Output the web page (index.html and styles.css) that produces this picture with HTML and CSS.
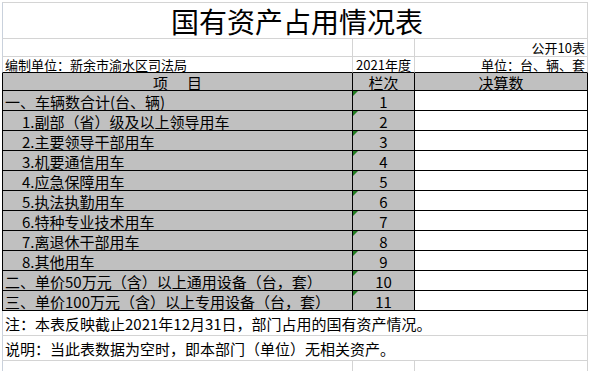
FILE: index.html
```html
<!DOCTYPE html>
<html lang="zh-CN">
<head>
<meta charset="utf-8">
<title>国有资产占用情况表</title>
<link rel="stylesheet" href="styles.css">
</head>
<body>
<div class="sheet">
  <div class="c a span3 top title">国有资产占用情况表</div>

  <div class="c a"></div>
  <div class="c"></div>
  <div class="c small right">公开10表</div>

  <div class="c a small left tb">编制单位：新余市渝水区司法局</div>
  <div class="c small center tb">2021年度</div>
  <div class="c small right tb">单位：台、辆、套</div>

  <div class="c a t grey center">项<span class="gap"></span>目</div>
  <div class="c t grey center">栏次</div>
  <div class="c t grey center">决算数</div>

  <div class="c a t grey left">一、车辆数合计(台、辆)</div>
  <div class="c t grey center num">1</div>
  <div class="c t"></div>

  <div class="c a t grey left sub">1.副部（省）级及以上领导用车</div>
  <div class="c t grey center num">2</div>
  <div class="c t"></div>

  <div class="c a t grey left sub">2.主要领导干部用车</div>
  <div class="c t grey center num">3</div>
  <div class="c t"></div>

  <div class="c a t grey left sub">3.机要通信用车</div>
  <div class="c t grey center num">4</div>
  <div class="c t"></div>

  <div class="c a t grey left sub">4.应急保障用车</div>
  <div class="c t grey center num">5</div>
  <div class="c t"></div>

  <div class="c a t grey left sub">5.执法执勤用车</div>
  <div class="c t grey center num">6</div>
  <div class="c t"></div>

  <div class="c a t grey left sub">6.特种专业技术用车</div>
  <div class="c t grey center num">7</div>
  <div class="c t"></div>

  <div class="c a t grey left sub">7.离退休干部用车</div>
  <div class="c t grey center num">8</div>
  <div class="c t"></div>

  <div class="c a t grey left sub">8.其他用车</div>
  <div class="c t grey center num">9</div>
  <div class="c t"></div>

  <div class="c a t grey left">二、单价50万元（含）以上通用设备（台，套）</div>
  <div class="c t grey center num">10</div>
  <div class="c t"></div>

  <div class="c a t grey left">三、单价100万元（含）以上专用设备（台，套）</div>
  <div class="c t grey center num">11</div>
  <div class="c t"></div>

  <div class="c a span3 left note">注：本表反映截止2021年12月31日，部门占用的国有资产情况。</div>
  <div class="c a span3 left note">说明：当此表数据为空时，即本部门（单位）无相关资产。</div>

  <div class="c a"></div>
  <div class="c"></div>
  <div class="c"></div>
</div>
</body>
</html>
```

FILE: styles.css
```css
html, body {
  margin: 0;
  padding: 0;
  background: #ffffff;
}

body {
  font-family: "Noto Sans CJK SC", "Noto Sans", sans-serif;
  color: #000000;
  width: 592px;
  height: 371px;
  overflow: hidden;
}

.sheet {
  margin: 2px 0 0 2px;
  display: grid;
  grid-template-columns: 351px 62px 173px;
  grid-template-rows: 37px 18px 16px 18px repeat(11, 20px) 25px 25px 11px;
}

.c {
  box-sizing: border-box;
  border-right: 1px solid #d4d4d4;
  border-bottom: 1px solid #d4d4d4;
  display: flex;
  align-items: center;
  font-size: 15px;
  line-height: 18px;
  white-space: nowrap;
  position: relative;
}

.a {
  border-left: 1px solid #c9d1dc;
}

.top {
  border-top: 1px solid #d4d4d4;
}

.span3 {
  grid-column: 1 / 4;
}

.title {
  justify-content: center;
  font-size: 28px;
  line-height: 32px;
  padding-left: 4px;
}

.small {
  font-size: 13px;
  line-height: 14px;
}

.left {
  justify-content: flex-start;
  padding-left: 2px;
}

.right {
  justify-content: flex-end;
  padding-right: 2px;
}

.center {
  justify-content: center;
}

.tb {
  border-bottom-color: #000000;
}

.t {
  border-right-color: #000000;
  border-bottom-color: #000000;
  padding-top: 2px;
}

.a.t {
  border-left-color: #000000;
}

.grey {
  background: #c0c0c0;
}

.gap {
  display: inline-block;
  width: 19px;
}

.sub {
  padding-left: 19px;
}

.num::before {
  content: "";
  position: absolute;
  left: 0;
  top: 0;
  width: 0;
  height: 0;
  border-top: 5px solid #1f7a1f;
  border-right: 5px solid transparent;
}

.note {
  padding-top: 1px;
}
```
